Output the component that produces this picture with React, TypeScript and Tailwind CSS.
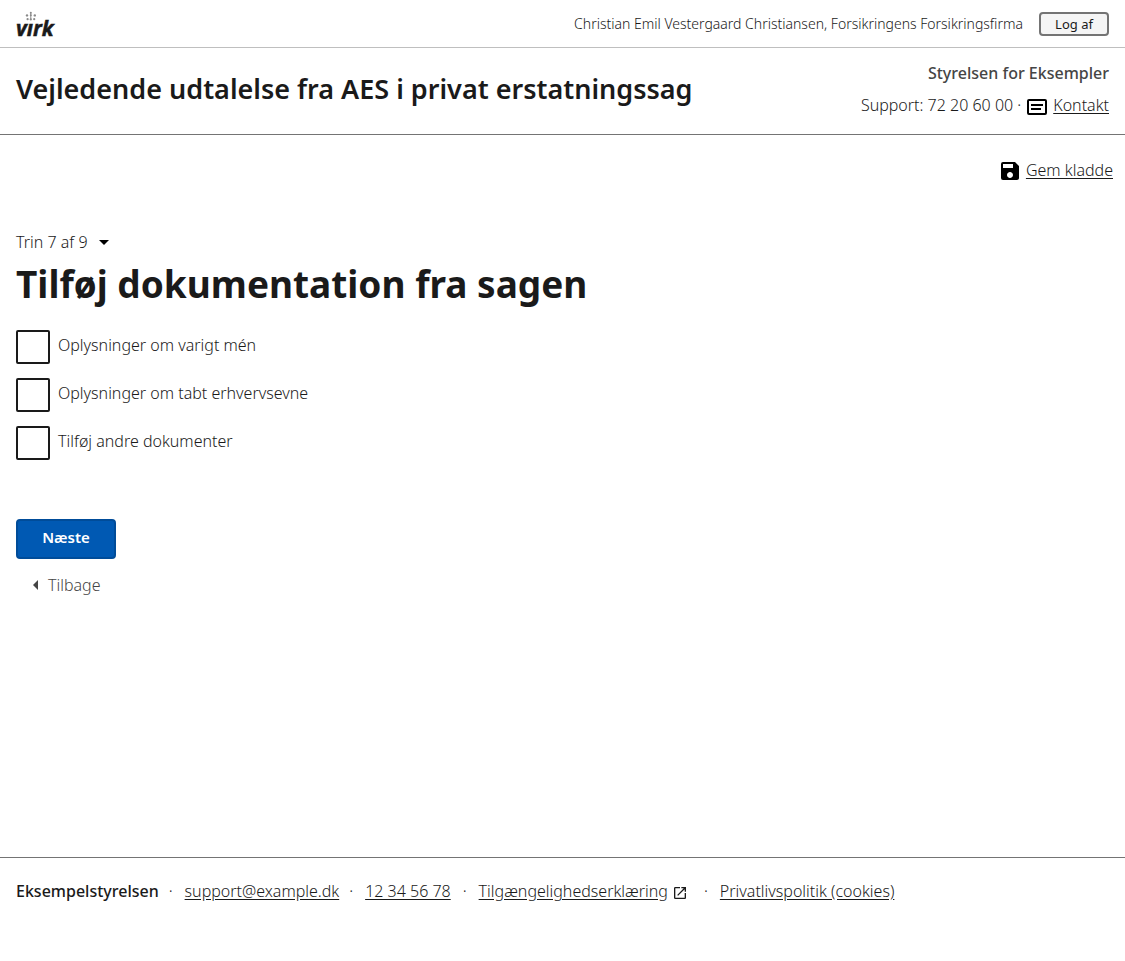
import { MdArrowDropDown, MdArrowLeft, MdOpenInNew, MdSave } from "react-icons/md";

const options = [
  "Oplysninger om varigt mén",
  "Oplysninger om tabt erhvervsevne",
  "Tilføj andre dokumenter",
];

function Logo() {
  return (
    <a href="#" aria-label="virk" className="block">
      <svg width="44" height="40" viewBox="0 0 44 40" className="block">
        <g fill="#8a8a8a">
          <circle cx="14.8" cy="8.8" r="1" />
          <rect x="14.3" y="8.8" width="1" height="7" />
          <circle cx="14.8" cy="11.2" r="1" />
          <circle cx="11" cy="11.4" r="1.2" />
          <circle cx="18.8" cy="11.4" r="1.2" />
          <circle cx="11.6" cy="15.2" r="1.1" />
          <circle cx="14.8" cy="15.4" r="1.1" />
          <circle cx="18.2" cy="15.2" r="1.1" />
        </g>
        <text
          x="0"
          y="32"
          fill="#1a1a1a"
          stroke="#1a1a1a"
          strokeWidth="0.5"
          className="font-['Open_Sans',sans-serif] text-[21px] font-bold italic"
        >
          vırk
        </text>
      </svg>
    </a>
  );
}

function ContactIcon() {
  return (
    <svg width="20" height="16" viewBox="0 0 20 16" className="mt-1" aria-hidden="true">
      <rect x="1" y="1" width="18" height="14" rx="1" fill="none" stroke="#000" strokeWidth="2" />
      <path d="M4 6h12M4 10h10" stroke="#000" strokeWidth="2" />
    </svg>
  );
}

export default function App() {
  return (
    <div className="flex min-h-screen flex-col bg-white font-['Noto_Sans',sans-serif] text-base leading-6 text-[#1a1a1a]">
      <header>
        <div className="flex h-12 items-center justify-between border-b border-[#bfbfbf] px-4">
          <Logo />
          <div className="flex items-center gap-4">
            <span className="text-sm font-light">
              Christian Emil Vestergaard Christiansen, Forsikringens Forsikringsfirma
            </span>
            <button
              type="button"
              className="h-6 w-[70px] rounded border-2 border-[#747474] bg-[#f5f5f5] text-[13px] leading-5"
            >
              Log af
            </button>
          </div>
        </div>
        <div className="flex items-start justify-between border-b border-[#747474] px-4 pt-[13px] pb-[17px]">
          <h2 className="pt-2.5 text-[27px] leading-9 font-semibold">
            Vejledende udtalelse fra AES i privat erstatningssag
          </h2>
          <div className="flex flex-col items-end gap-2">
            <p className="font-medium text-[#454545]">Styrelsen for Eksempler</p>
            <p className="flex items-center font-light">
              <span className="mr-1.5">Support: 72 20 60 00 ·</span>
              <ContactIcon />
              <a href="#" className="ml-1.5 underline underline-offset-2">
                Kontakt
              </a>
            </p>
          </div>
        </div>
      </header>

      <div className="flex justify-end px-3 pt-5.5">
        <a href="#" className="flex items-center gap-1 font-light">
          <MdSave size={24} color="#000" className="mt-0.5" />
          <span className="underline underline-offset-2">Gem kladde</span>
        </a>
      </div>

      <main className="flex flex-1 flex-col items-start px-4 pt-[47px]">
        <button type="button" className="flex items-center gap-1 font-light">
          Trin 7 af 9
          <MdArrowDropDown size={24} color="#000" />
        </button>
        <h1 className="pt-1 text-[37px] leading-[52px] font-bold">Tilføj dokumentation fra sagen</h1>
        <div className="mt-5 flex flex-col gap-3.5">
          {options.map((label) => (
            <label key={label} className="flex items-start gap-2 font-light">
              <input
                type="checkbox"
                className="size-[34px] appearance-none rounded-xs border-2 border-[#1a1a1a] bg-white checked:bg-[#1a1a1a]"
              />
              <span className="pt-[3px]">{label}</span>
            </label>
          ))}
        </div>
        <button
          type="button"
          className="mt-[59px] flex h-10 w-[100px] items-start justify-center rounded border-2 border-[#004c99] bg-[#0059b3] pt-1 text-[15px] font-semibold text-white"
        >
          Næste
        </button>
        <a href="#" className="mt-3.5 ml-2 flex items-center font-light text-[#454545]">
          <MdArrowLeft size={24} />
          Tilbage
        </a>
      </main>

      <footer className="border-t border-[#747474] px-4 pt-[21px] pb-[58px] font-light">
        <ul className="flex flex-wrap items-center">
          <li className="font-medium">Eksempelstyrelsen</li>
          <li className="mr-3 ml-2.5">·</li>
          <li>
            <a href="#" className="underline underline-offset-2">support@example.dk</a>
          </li>
          <li className="mr-3 ml-2.5">·</li>
          <li>
            <a href="#" className="underline underline-offset-2">12 34 56 78</a>
          </li>
          <li className="mx-3">·</li>
          <li>
            <a href="#" className="flex items-center gap-1">
              <span className="underline underline-offset-2">Tilgængelighedserklæring</span>
              <MdOpenInNew size={16} className="mt-1" />
            </a>
          </li>
          <li className="mr-3 ml-4">·</li>
          <li>
            <a href="#" className="underline underline-offset-2">Privatlivspolitik (cookies)</a>
          </li>
        </ul>
      </footer>
    </div>
  );
}
